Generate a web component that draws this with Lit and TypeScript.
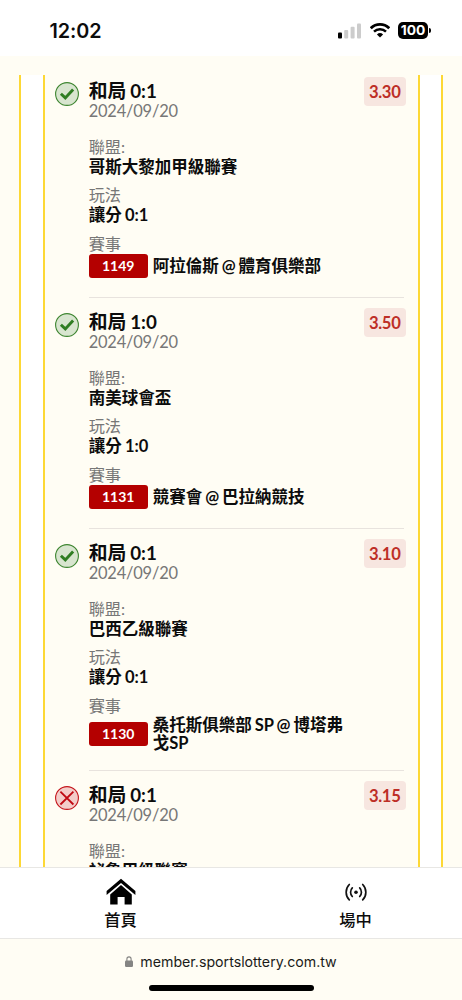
import { LitElement, html, css, svg } from "lit";
import { customElement, property } from "lit/decorators.js";

interface Pick {
  won: boolean;
  title: string;
  date: string;
  odds: string;
  league: string;
  play: string;
  code: string;
  match: string[];
}

const PICKS: Pick[] = [
  { won: true, title: "和局 0:1", date: "2024/09/20", odds: "3.30", league: "哥斯大黎加甲級聯賽", play: "讓分 0:1", code: "1149", match: ["阿拉倫斯 @ 體育俱樂部"] },
  { won: true, title: "和局 1:0", date: "2024/09/20", odds: "3.50", league: "南美球會盃", play: "讓分 1:0", code: "1131", match: ["競賽會 @ 巴拉納競技"] },
  { won: true, title: "和局 0:1", date: "2024/09/20", odds: "3.10", league: "巴西乙級聯賽", play: "讓分 0:1", code: "1130", match: ["桑托斯俱樂部 SP @ 博塔弗", "戈SP"] },
  { won: false, title: "和局 0:1", date: "2024/09/20", odds: "3.15", league: "祕魯甲級聯賽", play: "", code: "", match: [] },
];

@customElement("status-bar")
export class StatusBar extends LitElement {
  static styles = css`
    :host { display: flex; height: 56px; background: #fff; box-sizing: border-box; padding: 0 33.5px 0 49.5px; align-items: flex-start; justify-content: space-between; font-family: Inter, sans-serif; }
    .time { font-size: 19.8px; font-weight: 600; line-height: 24px; margin-top: 19px; letter-spacing: -0.1px; }
    .icons { display: flex; align-items: center; margin-top: 22px; height: 17px; }
    .signal { width: 24px; height: 16px; margin-right: 8px; }
    .wifi { width: 20px; height: 15px; margin-right: 8px; }
    .battery { width: 30px; height: 16.5px; line-height: 16.5px; background: #000; color: #fff; border-radius: 5px; font-size: 13.8px; font-weight: 700; text-align: center; letter-spacing: -0.1px; }
    .tip { width: 2px; height: 5px; margin: 0 -2px 0 0.5px; background: #000; border-radius: 0 2px 2px 0; }
  `;
  render() {
    return html`
      <div class="time">12:02</div>
      <div class="icons">
        <svg class="signal" viewBox="0 0 24 16">
          <rect x="0" y="9.6" width="4" height="5.8" rx="1" />
          <rect x="6.2" y="7" width="4" height="8.4" rx="1" fill="#ccc" />
          <rect x="12.6" y="3.8" width="4" height="11.6" rx="1" fill="#ccc" />
          <rect x="19" y="0.6" width="4" height="14.8" rx="1" fill="#ccc" />
        </svg>
        <svg class="wifi" viewBox="0 0 20 15">
          <path d="M.8 5.2a13.2 13.2 0 0 1 18.4 0" fill="none" stroke="#000" stroke-width="2.7" />
          <path d="M4 8.7a8.7 8.7 0 0 1 12 0" fill="none" stroke="#000" stroke-width="2.5" />
          <path d="M10 14.6 6.9 11.5a4.6 4.6 0 0 1 6.2 0Z" />
        </svg>
        <div class="battery">100</div>
        <div class="tip"></div>
      </div>
    `;
  }
}

@customElement("result-badge")
export class ResultBadge extends LitElement {
  @property({ type: Boolean }) won = false;
  static styles = css`
    :host { display: block; width: 24px; height: 24px; }
    .icon { display: block; width: 24px; height: 24px; }
  `;
  render() {
    const c = this.won ? "#3d8530" : "#c4151b";
    return html`
      <svg class="icon" viewBox="0 0 24 24" fill="none">
        <circle cx="12" cy="12" r="11.4" fill=${this.won ? "#d8e5cf" : "#f3cdc9"} stroke=${c} stroke-width="1.1" />
        ${this.won
          ? svg`<path d="m5.9 11.7 4.4 4.2 7.8-8.5" stroke="#2f7d22" stroke-width="2.9" />`
          : svg`<path d="m5.4 5.6 13 12.9m0-12.9-13 12.9" stroke="#c00a12" stroke-width="1.8" />`}
      </svg>
    `;
  }
}

@customElement("pick-row")
export class PickRow extends LitElement {
  @property({ attribute: false }) pick!: Pick;
  static styles = css`
    :host { display: grid; grid-template-columns: 24px 315px; column-gap: 10px; padding-left: 10.2px; }
    .mark { margin-top: 15px; }
    .body { border-bottom: 1px solid #e8e3de; padding: 14.2px 0 18.6px; }
    .head { display: flex; justify-content: space-between; height: 40px; }
    .title { font-size: 18.8px; font-weight: 700; line-height: 20px; word-spacing: -0.6px; }
    .date { font-size: 16.45px; letter-spacing: -0.2px; line-height: 20px; color: #777; }
    .odds { width: 42px; height: 29px; line-height: 30px; margin: -4.4px -2px 0 0; border-radius: 4px; background: #f7e6e0; color: #bd2e26; font-size: 16.6px; font-weight: 700; text-align: center; letter-spacing: -0.3px; }
    .label { font-size: 16.2px; line-height: 20px; color: #777; margin-top: 8.5px; }
    .head + .label { margin-top: 15.5px; }
    .value { font-size: 16.5px; font-weight: 700; line-height: 20px; word-spacing: -0.7px; }
    .match { display: flex; align-items: center; gap: 5px; min-height: 24.7px; }
    .code { width: 59px; height: 24px; line-height: 24px; border-radius: 3px; background: #b40000; color: #fff; text-align: center; font-size: 14px; font-weight: 700; }
    .teams { font-size: 16.5px; font-weight: 700; line-height: 18px; word-spacing: -1px; padding-top: 0.4px; margin-bottom: -0.4px; }
  `;
  render() {
    const p = this.pick;
    return html`
      <result-badge class="mark" ?won=${p.won}></result-badge>
      <div class="body">
        <div class="head">
          <div><div class="title">${p.title}</div><div class="date">${p.date}</div></div>
          <div class="odds">${p.odds}</div>
        </div>
        <div class="label">聯盟:</div>
        <div class="value">${p.league}</div>
        ${p.play
          ? html`
              <div class="label">玩法</div>
              <div class="value">${p.play}</div>
              <div class="label">賽事</div>
              <div class="match">
                <div class="code">${p.code}</div>
                <div class="teams">${p.match.map((line) => html`<div>${line}</div>`)}</div>
              </div>
            `
          : null}
      </div>
    `;
  }
}

@customElement("app-root")
export class AppRoot extends LitElement {
  static styles = css`
    :host { display: flex; flex-direction: column; width: 462px; height: 1000px; overflow: hidden; background: #fffdf4; color: #0c0c0c; font-family: Lato, "Noto Sans CJK TC", sans-serif; }
    .scroll { flex: none; height: 811px; box-sizing: border-box; padding: 19px 19px 0; overflow: hidden; }
    .outer { box-sizing: border-box; width: 424px; height: 792px; border: solid #fdd835; border-width: 0 2.4px; background: #fff; padding: 0 21.5px; }
    .ticket { box-sizing: border-box; height: 792px; border: solid #fdd835; border-width: 0 2.4px; background: #fffdf4; overflow: hidden; }
    .list { margin-top: -8px; }
    .nav { display: grid; grid-template-columns: 241px 1fr; height: 72px; box-sizing: border-box; border: solid #e8e7e4; border-width: 1px 0; background: #fff; }
    .tab { display: flex; flex-direction: column; align-items: center; font-size: 16.3px; font-weight: 500; }
    .tab + .tab { padding-left: 8px; }
    .glyph { display: block; width: 30px; height: 28px; margin-top: 10px; }
    .name { line-height: 24px; margin-top: 2.4px; }
    .address { display: flex; justify-content: center; align-items: center; height: 46px; font: 14.2px/20px Inter, sans-serif; gap: 7px; color: #1b1b19; box-sizing: border-box; padding-bottom: 1px; }
    .lock { width: 8px; height: 11px; }
    .handle { width: 165px; height: 6px; border-radius: 3px; background: #000; margin: 0 auto; }
  `;
  render() {
    return html`
      <status-bar></status-bar>
      <main class="scroll">
        <div class="outer">
          <div class="ticket">
            <div class="list">${PICKS.map((p) => html`<pick-row .pick=${p}></pick-row>`)}</div>
          </div>
        </div>
      </main>
      <nav class="nav">
        <div class="tab">
          <svg class="glyph" viewBox="0 0 30 28">
            <path d="M.6 12.9 15 .8 29.4 12.9v4L15 4.9.6 16.9Z" />
            <path d="M15 7 25.8 16.4V26.6H18.6V19H11.6v7.6H4.2V16.4Z" />
          </svg>
          <span class="name">首頁</span>
        </div>
        <div class="tab">
          <svg class="glyph" viewBox="0 0 30 28" fill="none" stroke="#111" stroke-width="1.7" stroke-linecap="round">
            <circle cx="15" cy="14.2" r="1.8" fill="#111" stroke="none" />
            <path d="M11.3 9.9a6.2 6.2 0 0 0 0 8.6M18.7 9.9a6.2 6.2 0 0 1 0 8.6M8.3 6.5a11 11 0 0 0 0 15.4M21.7 6.5a11 11 0 0 1 0 15.4" />
          </svg>
          <span class="name">場中</span>
        </div>
      </nav>
      <footer>
        <div class="address">
          <svg class="lock" viewBox="0 0 8 11"><rect y="4.6" width="8" height="6.4" rx="1.2" fill="#858583" /><path d="M1.9 5V3a2.1 2.1 0 0 1 4.2 0v2" fill="none" stroke="#858583" stroke-width="1.1" /></svg>
          <span>member.sportslottery.com.tw</span>
        </div>
        <div class="handle"></div>
      </footer>
    `;
  }
}
